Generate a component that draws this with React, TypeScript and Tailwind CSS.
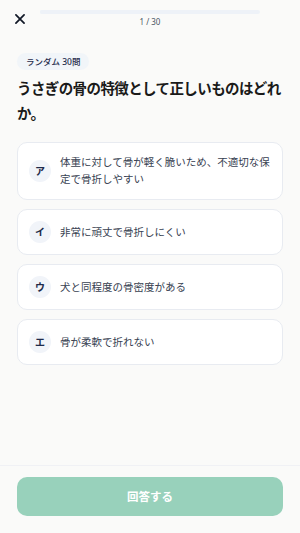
import React from "react";

const options = [
  { k: "ア", t: "体重に対して骨が軽く脆いため、不適切な保定で骨折しやすい" },
  { k: "イ", t: "非常に頑丈で骨折しにくい" },
  { k: "ウ", t: "犬と同程度の骨密度がある" },
  { k: "エ", t: "骨が柔軟で折れない" },
];

export default function App() {
  return (
    <div
      className="w-[300px] h-[533px] bg-[#fafaf9] flex flex-col overflow-hidden"
      style={{ fontFamily: '"Noto Sans", "Noto Sans CJK JP", sans-serif' }}
    >
      <div className="flex items-start px-[13px] pt-[10px] h-[36px]">
        <button className="w-[14px] h-[14px] mt-[2px] text-[#111827]">
          <svg viewBox="0 0 24 24" width="14" height="14" fill="none" stroke="currentColor" strokeWidth="3" strokeLinecap="round">
            <path d="M5 5L19 19M19 5L5 19" />
          </svg>
        </button>
        <div className="ml-[13px] w-[220px] flex flex-col items-center">
          <div className="w-full h-[4px] rounded-full bg-[#eef2f8]">
            <div className="h-full rounded-full bg-[#eef2f8]" style={{ width: `${(1 / 30) * 100}%` }} />
          </div>
          <div className="text-[8px] leading-[10px] mt-[3px] text-[#4b5563]">1 / 30</div>
        </div>
      </div>

      <div className="flex-1 px-[17px] pt-[17px]">
        <div className="flex w-fit items-center h-[17px] px-[9px] rounded-full bg-[#f1f5f9] text-[8.5px] leading-[17px] font-medium text-[#1e2a4a]">
          ランダム 30問
        </div>
        <h1 className="mt-[6px] text-[14.5px] tracking-[-0.6px] leading-[25px] font-bold text-[#1a1a1a]">
          うさぎの骨の特徴として正しいものはどれか。
        </h1>
        <div className="mt-[16px] flex flex-col gap-[9px]">
          {options.map((o) => (
            <div
              key={o.k}
              className="flex items-center bg-white border border-[#e8ebf1] rounded-[10px] px-[11px] py-[11px]"
            >
              <div className="w-[22px] h-[22px] shrink-0 rounded-full bg-[#f1f4f9] flex items-center justify-center text-[10px] font-bold text-[#1e2a4a]">
                {o.k}
              </div>
              <div className="ml-[9px] text-[10.5px] leading-[17px] text-[#374151]">{o.t}</div>
            </div>
          ))}
        </div>
      </div>

      <div className="border-t border-[#f0f1f5] px-[17px] pt-[11px] pb-[17px]">
        <button className="w-full h-[39px] rounded-[10px] bg-[#98d1bb] text-white text-[11.5px] font-bold">
          回答する
        </button>
      </div>
    </div>
  );
}
